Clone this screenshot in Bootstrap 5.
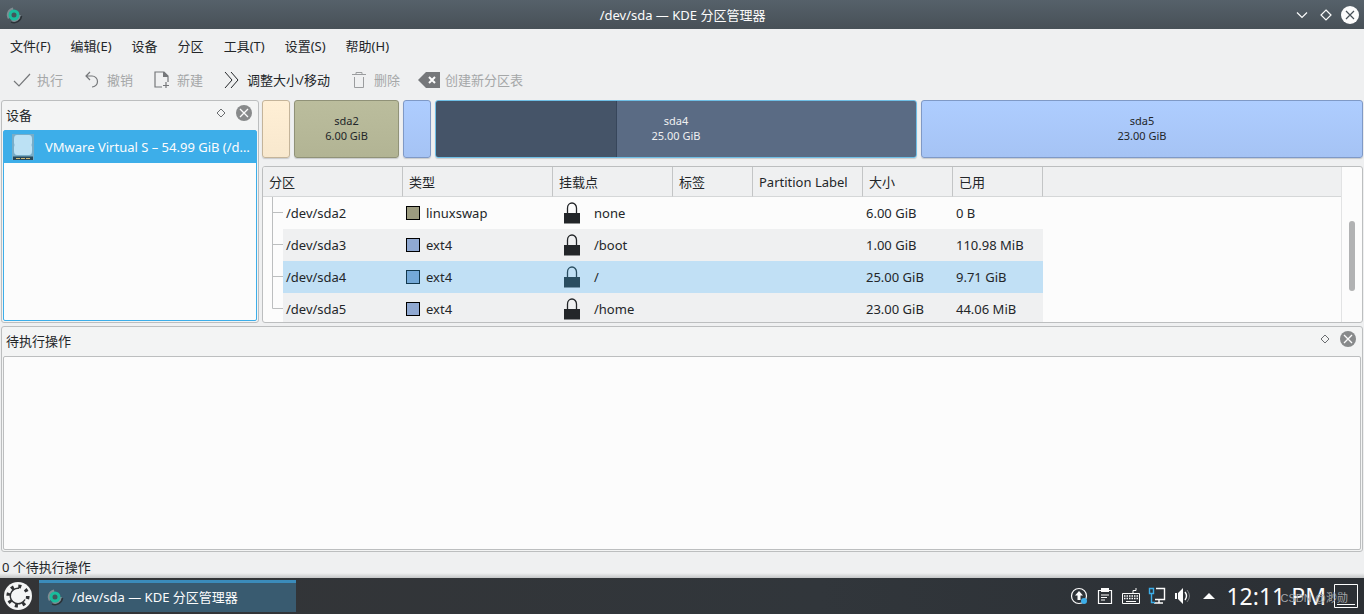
<!DOCTYPE html>
<html lang="zh-CN">
<head>
<meta charset="utf-8">
<meta name="viewport" content="width=device-width, initial-scale=1">
<title>/dev/sda — KDE 分区管理器</title>
<link href="https://cdn.jsdelivr.net/npm/bootstrap@5.3.0/dist/css/bootstrap.min.css" rel="stylesheet">
<style>
  body { font: 13px/20px "Noto Sans", "Noto Sans CJK SC", sans-serif; color: #232629; background: #eff0f1; }
  svg { display: block; flex: none; }
  button { font: inherit; color: inherit; background: none; border: 0; padding: 0; }
  .titlebar { height: 29px; color: #fcfcfc; background: linear-gradient(#56616a, #475057); padding: 0 4px 0 5px; }
  .side { flex: 1 1 0; }
  .menubar { height: 33px; padding: 0 10px; gap: 20px; }
  .menubar a { color: inherit; text-decoration: none; white-space: nowrap; }
  .toolbar { height: 36px; padding: 0 12px; gap: 20px; }
  .toolbar button { display: flex; align-items: center; gap: 5px; white-space: nowrap; }
  .toolbar button:disabled { color: #a5a7a8; }
  .toolbar svg { color: #75777a; }
  .toolbar button:enabled svg { color: #232629; }
  .workspace { gap: 3px; padding: 2px 1px 0; }
  .dock { border: 1px solid #bcbebf; border-radius: 3px; background: #f3f4f4; padding: 0 1px 1px; }
  .dock-head { height: 29px; padding: 0 4px 2px 3px; }
  .dock-head h2 { font-size: 13px; line-height: 20px; margin: 0; font-weight: 400; }
  .dock-head .tools { gap: 9px; padding-bottom: 4px; color: #6a6d70; }
  .devices { width: 258px; flex: none; height: 223px; }
  .view { border: 1px solid #bcbebf; border-radius: 2px; background: #fcfcfc; }
  .view.active { border-color: #3daee9; }
  .device { height: 32px; background: #3daee9; color: #fcfcfc; padding: 0 6px 0 7px; gap: 10px; width: 100%; text-align: left; }
  .diskmap { min-width: 0; }
  .partbar { height: 58px; gap: 4px; font-size: 11px; line-height: 15px; }
  .part { border: 1px solid; border-radius: 3px; min-width: 28px; padding-bottom: 2px; text-align: center; box-shadow: 0 1px 1px #c8cacc; overflow: hidden; }
  .p-fat { background: linear-gradient(#ffefd5, #f8e8ce); border-color: #c4b49a; }
  .p-swap { background: linear-gradient(#bbbd9d, #b2b494); border-color: #909278; }
  .p-ext { background: linear-gradient(#aecdff, #a5c3f4); border-color: #7f99c6; }
  .p-sel { color: #eff0f1; border-color: #6fbfe6; background: linear-gradient(90deg, #455468 37.5%, #37465b 37.5%, #37465b 37.7%, #5a6b84 37.7%); }
  .p-min { flex: 0 0 28px; }
  .partlist { border: 1px solid #bcbebf; border-radius: 3px; background: #fcfcfc; height: 157px; margin-top: 8px; overflow: hidden; }
  .parttable { width: 100%; table-layout: fixed; border-collapse: separate; border-spacing: 0; white-space: nowrap; }
  .parttable th { height: 30px; padding: 0 6px; font-weight: 400; background: #eff0f1; border-right: 1px solid #c3c5c6; border-bottom: 1px solid #d5d7d8; }
  .parttable th:last-child { border-right: 0; }
  .parttable td { height: 32px; padding: 0 3px; }
  .parttable td.tree { padding: 0; }
  .tree-cell { height: 32px; }
  .branch { width: 20px; flex: none; color: #bcbebf; }
  .tree-cell span { flex: 1; padding-left: 3px; line-height: 32px; }
  .alt td:not(:last-child):not(.tree), .alt .tree-cell span { background: #eff0f1; }
  .sel td:not(:last-child):not(.tree), .sel .tree-cell span { background: #c1e0f5; }
  .swatch { width: 14px; height: 14px; border: 1px solid #000; background: #8fa8d1; margin-right: 6px; }
  .swatch.swap { background: #9c9b7f; }
  .lock { margin: 0 14px 0 8px; }
  .sel .swatch { background: #74a9d8; border-color: #12384d; }
  .sel .lock { color: #2a4d60; }
  .track { width: 21px; flex: none; border-left: 1px solid #e2e3e4; padding: 54px 7px 0 7px; }
  .thumb { width: 6px; height: 70px; border-radius: 3px; background: #b1b2b3; }
  .pending { margin: 3px 1px 0; min-height: 120px; }
  .statusbar { height: 26px; padding: 5px 2px 0; background: linear-gradient(#eff0f1 21px, #c4c6c7); }
  .taskbar { height: 36px; color: #fcfcfc; background: linear-gradient(90deg, #333436, #31363b 60%, #2b2f34); }
  .launcher { width: 39px; padding-left: 4px; }
  .task { width: 257px; height: 32px; background: #395b70; border-top: 3px solid #3b8cbb; padding: 0 7px 2px; gap: 8px; }
  .tray { gap: 8px; padding-right: 6px; }
  .clock { font-size: 23px; line-height: 32px; white-space: nowrap; }
  .watermark { position: absolute; right: 16px; bottom: 8px; font: 11px/16px "Liberation Sans", "Noto Sans CJK SC", sans-serif; color: #a4a6a8; white-space: nowrap; }
</style>
</head>
<body class="d-flex flex-column min-vh-100">
<svg width="0" height="0" class="position-absolute" aria-hidden="true">
  <defs>
    <symbol id="app" viewBox="0 0 18 18"><path d="M3 13A7.500 7.500 0 0 1 8 1.500L9 9zM15.800 9A7 7 0 0 1 6 15.500L9 9z" fill="#7f8c92"/><path d="M16.500 10A7.500 7.500 0 0 1 6 16" fill="none" stroke="#2b3237" stroke-width="1.500"/><circle cx="9" cy="9" r="4" fill="#43565b" stroke="#1abc9c" stroke-width="3"/></symbol>
    <symbol id="close" viewBox="0 0 18 18"><circle cx="9" cy="9" r="8" fill="#888a8b"/><path d="M5 5l8 8M13 5l-8 8" stroke="#fcfcfc" stroke-width="1.300"/></symbol>
    <symbol id="diamond" viewBox="0 0 10 10"><path d="M5 1l4 4-4 4-4-4z" fill="none" stroke="currentColor"/></symbol>
    <symbol id="lock" viewBox="0 0 16 22"><path d="M3.500 12V6a4.500 5 0 0 1 9 0v6" fill="none" stroke="currentColor" stroke-width="1.300"/><path d="M0 11h16v10.500H0z" fill="currentColor"/></symbol>
  </defs>
</svg>

<header class="titlebar d-flex align-items-center">
  <div class="side"><svg width="18" height="18"><use href="#app"/></svg></div>
  <div>/dev/sda — KDE 分区管理器</div>
  <div class="side d-flex align-items-center justify-content-end gap-1">
    <button aria-label="最小化"><svg width="20" height="20"><path d="M5 7.500l5 5 5-5" fill="none" stroke="#fcfcfc" stroke-width="1.200"/></svg></button>
    <button aria-label="最大化"><svg width="20" height="20"><path d="M10 5l5 5-5 5-5-5z" fill="none" stroke="#fcfcfc" stroke-width="1.200"/></svg></button>
    <button aria-label="关闭"><svg width="20" height="20"><circle cx="10" cy="10" r="9" fill="#fcfcfc"/><path d="M6 6l8 8M14 6l-8 8" stroke="#475057" stroke-width="1.200"/></svg></button>
  </div>
</header>

<nav class="menubar d-flex align-items-center">
  <a href="#">文件(F)</a><a href="#">编辑(E)</a><a href="#">设备</a><a href="#">分区</a><a href="#">工具(T)</a><a href="#">设置(S)</a><a href="#">帮助(H)</a>
</nav>

<div class="toolbar d-flex align-items-center" role="toolbar">
  <button disabled><svg width="20" height="20"><path d="M2 11l5 5L18 4" fill="none" stroke="currentColor" stroke-width="1.200"/></svg>执行</button>
  <button disabled><svg width="19" height="20"><path d="M7 2L3 6l4 4M3 6h6a5 5 0 0 1 0 11" fill="none" stroke="currentColor" stroke-width="1.200"/></svg>撤销</button>
  <button disabled><svg width="19" height="20"><path d="M9 17H2V2h9l4 4v6M13 12v6M10 15.500h6" fill="none" stroke="currentColor" stroke-width="1.200"/><path d="M10 2h1l4 4v1h-5z" fill="currentColor"/></svg>新建</button>
  <button><svg width="19" height="20"><path d="M2 2l7 8-7 8M8 2l7 8-7 8" fill="none" stroke="currentColor" stroke-width="1"/></svg>调整大小/移动</button>
  <button disabled><svg width="19" height="20"><path d="M2 4.500h14M6 4V2.500h6V4M4.500 7v10.500h9V7" fill="none" stroke="#9b9d9f" stroke-width="1"/></svg>删除</button>
  <button disabled><svg width="20" height="20" viewBox="2 0 20 20" overflow="visible"><path d="M0 10l8-8h14v16H8z" fill="currentColor"/><path d="M11 7l6 6M17 7l-6 6" stroke="#fcfcfc" stroke-width="2"/></svg>创建新分区表</button>
</div>

<main class="flex-grow-1 d-flex flex-column">
  <div class="workspace d-flex">
    <section class="dock devices d-flex flex-column">
      <div class="dock-head d-flex align-items-center justify-content-between">
        <h2>设备</h2>
        <div class="tools d-flex align-items-center">
          <button aria-label="浮动"><svg width="10" height="10"><use href="#diamond"/></svg></button>
          <button aria-label="关闭设备"><svg width="18" height="18"><use href="#close"/></svg></button>
        </div>
      </div>
      <div class="view active flex-grow-1">
        <button class="device d-flex align-items-center">
          <svg width="24" height="28"><path d="M1 1h22v26H1z" fill="#78adc8"/><path d="M6 2h12q3 0 3 4v4q-1 2 0 4v4q0 4-3 4H6q-3 0-3-4v-4q1-2 0-4V6q0-4 3-4z" fill="#bce1f4"/><path d="M2 23.500h20V27H2z" fill="#27485a"/><path d="M5 25.500h14" stroke="#d2b978" stroke-dasharray="4 1"/></svg>
          <span class="text-truncate">VMware Virtual S – 54.99 GiB (/d...</span>
        </button>
      </div>
    </section>

    <section class="diskmap flex-grow-1 d-flex flex-column">
      <div class="partbar d-flex">
        <div class="part p-fat p-min"></div>
        <div class="part p-swap d-flex flex-column justify-content-center" style="flex:103 1 0"><span>sda2</span><span>6.00 GiB</span></div>
        <div class="part p-ext p-min"></div>
        <div class="part p-sel d-flex flex-column justify-content-center" style="flex:480 1 0"><span>sda4</span><span>25.00 GiB</span></div>
        <div class="part p-ext d-flex flex-column justify-content-center" style="flex:440 1 0"><span>sda5</span><span>23.00 GiB</span></div>
      </div>
      <div class="partlist d-flex">
        <div class="flex-grow-1 overflow-hidden">
          <table class="parttable">
            <colgroup><col style="width:140px"><col style="width:150px"><col style="width:120px"><col style="width:80px"><col style="width:110px"><col style="width:90px"><col style="width:90px"><col></colgroup>
            <thead><tr><th>分区</th><th>类型</th><th>挂载点</th><th>标签</th><th>Partition Label</th><th>大小</th><th>已用</th><th></th></tr></thead>
            <tbody>
              <tr>
                <td class="tree"><div class="tree-cell d-flex"><svg class="branch" height="32"><path d="M9.500 0v32M9.500 15.500H20" fill="none" stroke="currentColor"/></svg><span>/dev/sda2</span></div></td>
                <td><div class="d-flex align-items-center"><i class="swatch swap"></i>linuxswap</div></td>
                <td><div class="d-flex align-items-center"><svg class="lock" width="16" height="22"><use href="#lock"/></svg>none</div></td>
                <td></td><td></td><td>6.00 GiB</td><td>0 B</td><td></td>
              </tr>
              <tr class="alt">
                <td class="tree"><div class="tree-cell d-flex"><svg class="branch" height="32"><path d="M9.500 0v32M9.500 15.500H20" fill="none" stroke="currentColor"/></svg><span>/dev/sda3</span></div></td>
                <td><div class="d-flex align-items-center"><i class="swatch"></i>ext4</div></td>
                <td><div class="d-flex align-items-center"><svg class="lock" width="16" height="22"><use href="#lock"/></svg>/boot</div></td>
                <td></td><td></td><td>1.00 GiB</td><td>110.98 MiB</td><td></td>
              </tr>
              <tr class="sel">
                <td class="tree"><div class="tree-cell d-flex"><svg class="branch" height="32"><path d="M9.500 0v32M9.500 15.500H20" fill="none" stroke="currentColor"/></svg><span>/dev/sda4</span></div></td>
                <td><div class="d-flex align-items-center"><i class="swatch"></i>ext4</div></td>
                <td><div class="d-flex align-items-center"><svg class="lock" width="16" height="22"><use href="#lock"/></svg>/</div></td>
                <td></td><td></td><td>25.00 GiB</td><td>9.71 GiB</td><td></td>
              </tr>
              <tr class="alt">
                <td class="tree"><div class="tree-cell d-flex"><svg class="branch" height="32"><path d="M9.500 0v15.500H20" fill="none" stroke="currentColor"/></svg><span>/dev/sda5</span></div></td>
                <td><div class="d-flex align-items-center"><i class="swatch"></i>ext4</div></td>
                <td><div class="d-flex align-items-center"><svg class="lock" width="16" height="22"><use href="#lock"/></svg>/home</div></td>
                <td></td><td></td><td>23.00 GiB</td><td>44.06 MiB</td><td></td>
              </tr>
            </tbody>
          </table>
        </div>
        <div class="track"><div class="thumb"></div></div>
      </div>
    </section>
  </div>

  <section class="dock pending flex-grow-1 d-flex flex-column">
    <div class="dock-head d-flex align-items-center justify-content-between">
      <h2>待执行操作</h2>
      <div class="tools d-flex align-items-center">
        <button aria-label="浮动"><svg width="10" height="10"><use href="#diamond"/></svg></button>
        <button aria-label="关闭待执行操作"><svg width="18" height="18"><use href="#close"/></svg></button>
      </div>
    </div>
    <div class="view flex-grow-1"></div>
  </section>
</main>

<div class="statusbar">0 个待执行操作</div>

<footer class="taskbar d-flex align-items-center position-relative">
  <button class="launcher" aria-label="应用程序启动器"><svg width="28" height="28"><circle cx="14" cy="14" r="14" fill="#f4f5f5"/><circle cx="14" cy="14" r="9.800" fill="none" stroke="#303234" stroke-width="3.600" stroke-dasharray="3 4.700"/><path d="M15 6.200A7.800 7.800 0 1 0 21 17.500" fill="none" stroke="#303234" stroke-width="1.500"/></svg></button>
  <button class="task d-flex align-items-center"><svg width="18" height="18"><use href="#app"/></svg>/dev/sda — KDE 分区管理器</button>
  <div class="tray d-flex align-items-center ms-auto">
    <svg width="18" height="18"><circle cx="9" cy="9" r="7.500" fill="none" stroke="#fcfcfc" stroke-width="1.200"/><path d="M9 4l4 4.500h-2.500V13h-3V8.500H5z" fill="#fcfcfc"/><circle cx="14" cy="14" r="3" fill="#3daee9"/></svg>
    <svg width="18" height="18"><path d="M2.500 3.500h13v13h-13zM5 8h8M5 10.500h6M5 13h4" fill="none" stroke="#fcfcfc" stroke-width="1.200"/><path d="M5 1h8v4H5z" fill="#fcfcfc"/></svg>
    <svg width="18" height="18"><path d="M.5 6.500h17v10H.5zM11 6V3.500h3V1M4 14.500h10" fill="none" stroke="#fcfcfc"/><path d="M2 9h14M2 11.500h14" stroke="#fcfcfc" stroke-width="1.400" stroke-dasharray="1.500 1"/></svg>
    <svg width="18" height="18"><path d="M8 1.500h8.500v11H7M6 16h9M11 13v3" fill="none" stroke="#fcfcfc" stroke-width="1.400"/><path d="M1.500 1.500h4v5h-4zM3.500 7v8.500H7" fill="none" stroke="#3daee9" stroke-width="1.400"/></svg>
    <svg width="18" height="18"><path d="M1 6h2v6H1zM4 6l5-5v16l-5-5z" fill="#fcfcfc"/><path d="M11 5q3 4 0 8" fill="none" stroke="#fcfcfc" stroke-width="1.400"/><path d="M13 3q5 6 0 12" fill="none" stroke="#797c7f"/></svg>
    <svg width="18" height="18"><path d="M3 12l6-6 6 6z" fill="#fcfcfc"/></svg>
    <span class="clock">12:11 PM</span>
    <button aria-label="显示桌面"><svg width="24" height="24"><path d="M.5.5h23v23H.5zM3 20.500h18" fill="none" stroke="#fcfcfc"/></svg></button>
  </div>
  <span class="watermark">CSDN @渺勋</span>
</footer>
<script src="https://cdn.jsdelivr.net/npm/bootstrap@5.3.0/dist/js/bootstrap.bundle.min.js"></script>
</body>
</html>
